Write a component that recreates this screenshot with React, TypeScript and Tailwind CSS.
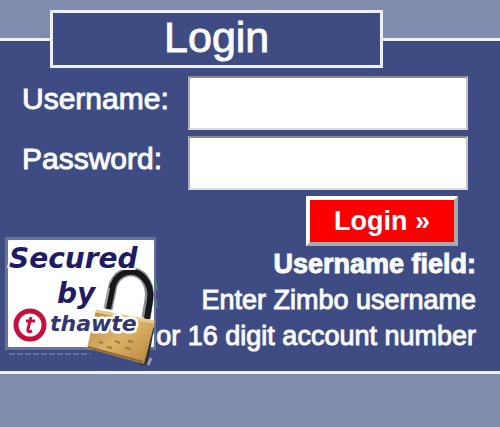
import React from "react";

const heavy = "[-webkit-text-stroke:1px_#f4f6fd]";

function ThawteBadge() {
  return (
    <svg
      viewBox="0 0 158 132"
      role="img"
      aria-label="Secured by thawte"
      className="mt-10 -mr-2 h-[132px] w-[158px] shrink-0"
    >
      <defs>
        <linearGradient id="brass" x1="0" y1="0" x2="1" y2="1">
          <stop offset="0" stopColor="#b98a42" />
          <stop offset="0.5" stopColor="#dab267" />
          <stop offset="1" stopColor="#b5843c" />
        </linearGradient>
      </defs>
      <rect x="5" y="1" width="151" height="113" fill="#65719f" />
      <path d="M9 118H90" stroke="#65719f" strokeWidth="2" strokeDasharray="6 2" />
      <rect x="8" y="4" width="146" height="107" rx="1" fill="#fff" />
      <path
        d="M108 73L113 49C119 34 135 32 144 42Q151 51 149 64L146 82"
        fill="none"
        stroke="#8b8b90"
        strokeWidth="9"
      />
      <path
        d="M108 73L113 49C119 34 135 32 144 42Q152 51 150 64L147 83"
        fill="none"
        stroke="#17171b"
        strokeWidth="6"
      />
      <path d="M105 72L109 52" stroke="#a6a6aa" strokeWidth="2" />
      <path d="M155 42L157 54M156 63L157 72M155 90L152 99" stroke="#4d7d68" strokeWidth="2" />
      <path d="M150 90L154 92L148 128L142 130L135 124Z" fill="#30343c" />
      <path d="M151 122L148 129" stroke="#8fa1bd" strokeWidth="3" />
      <path d="M96 74L155 85L144 128L87 112Z" fill="url(#brass)" />
      <path d="M96 75L154 86" stroke="#e7cb91" strokeWidth="3" />
      <path d="M88 111L143 126" stroke="#8f672f" strokeWidth="2" />
      <path
        d="M99 106l4 1m4 4l5 1m3-7l5 2m5 5l6 1m-3-8l5 1"
        stroke="#a1773a"
        strokeWidth="2"
      />
      <circle cx="30" cy="89" r="14" fill="#fff" stroke="#c4103f" strokeWidth="5" />
      <path
        d="M31 81L28 93Q27 97 32 95M26 85H35"
        fill="none"
        stroke="#c4103f"
        strokeWidth="3"
      />
      <g
        fill="#1d1c64"
        fontFamily="'DejaVu Sans', sans-serif"
        fontWeight="700"
        fontStyle="italic"
      >
        <text x="9" y="32" fontSize="28" stroke="#fff" strokeWidth="4" paintOrder="stroke">
          Secured
        </text>
        <text x="57" y="67" fontSize="28">by</text>
        <text
          x="50"
          y="95"
          fontSize="22"
          fill="#35356f"
          stroke="#fff"
          strokeWidth="5"
          strokeLinejoin="round"
          paintOrder="stroke"
        >
          thawte
        </text>
      </g>
    </svg>
  );
}

function Field({ id, label, type }: { id: string; label: string; type: string }) {
  return (
    <div className="flex pr-8 pl-[22px]">
      <label htmlFor={id} className={`w-[166px] shrink-0 text-[30px] leading-[46px] ${heavy}`}>
        {label}
      </label>
      <input
        id={id}
        name={id}
        type={type}
        className="h-[54px] min-w-0 flex-1 border-2 border-t-[#8b8b8b] border-r-[#c4c4c4] border-b-[#dedede] border-l-[#b0b0b0] bg-white px-2 text-2xl text-black outline-none"
      />
    </div>
  );
}

export default function App() {
  return (
    <main className="min-h-screen bg-[#808cae] pt-[10px] font-['Liberation_Sans',Arial,sans-serif] text-white">
      <form onSubmit={(event) => event.preventDefault()}>
        <fieldset className="min-w-0 border-y-[3px] border-[#eef1fb] bg-[#3e4c83] pb-[3px]">
          <legend className="ml-[50px] h-[58px] w-2/3 border-[3px] border-[#eef1fb] bg-[#3e4c83]">
            <span className={`block text-center text-[43px] leading-[48px] ${heavy}`}>Login</span>
          </legend>
          <div className="flex flex-col gap-[6px] pt-2">
            <Field id="username" label="Username:" type="text" />
            <Field id="password" label="Password:" type="password" />
            <div className="flex justify-between pr-6">
              <ThawteBadge />
              <div className="flex flex-col items-end whitespace-nowrap">
                <button
                  type="submit"
                  className="mr-[18px] h-[50px] w-[152px] border-4 border-t-white border-r-[#aaaaaa] border-b-[#aaaaaa] border-l-white bg-[#fb0000] text-[27px] leading-10 font-bold"
                >
                  Login »
                </button>
                <p className={`text-right text-[27px] leading-9 ${heavy}`}>
                  <strong>Username field:</strong>
                  <br />
                  Enter Zimbo username
                  <br />
                  or 16 digit account number
                </p>
              </div>
            </div>
          </div>
        </fieldset>
      </form>
    </main>
  );
}
